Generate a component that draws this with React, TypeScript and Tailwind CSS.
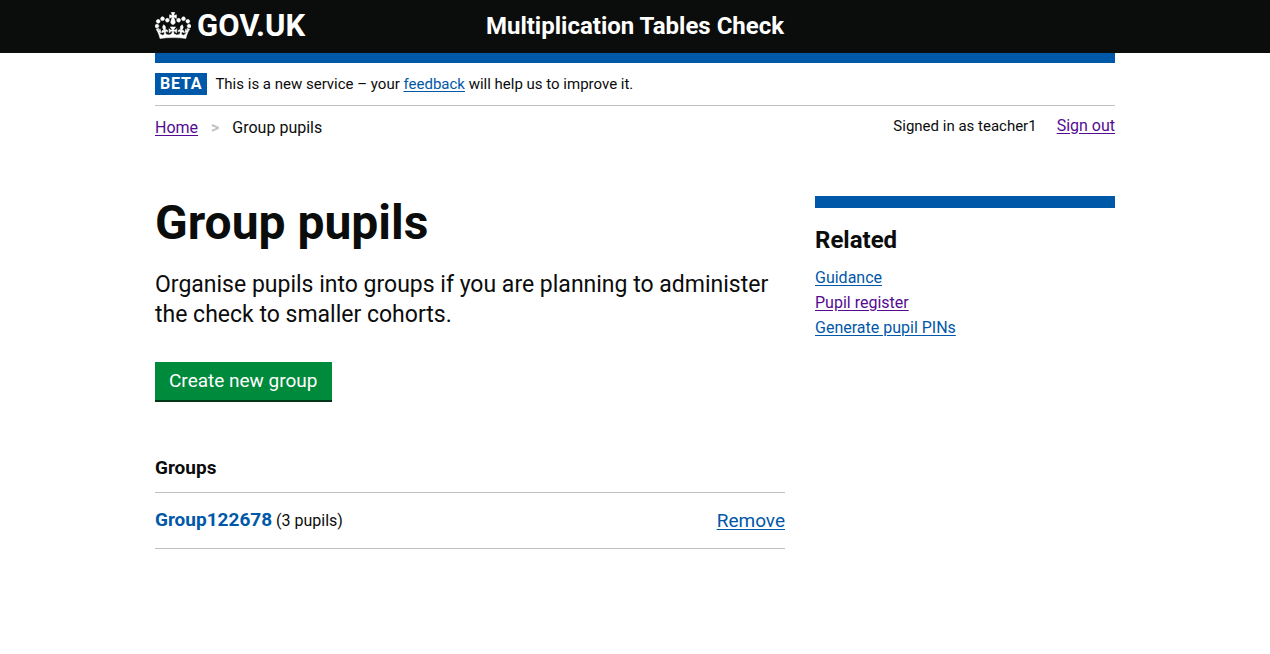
const link = 'text-[#0058a8] underline underline-offset-2'
const visited = 'text-[#540b91] underline underline-offset-2'

const related = [
  { label: 'Guidance', className: link },
  { label: 'Pupil register', className: visited },
  { label: 'Generate pupil PINs', className: link },
]

function Crown() {
  return (
    <svg viewBox="0 0 132 97" className="h-[27px] w-9" fill="currentColor" stroke="currentColor" strokeWidth="2" aria-hidden="true">
      <path
        fillRule="evenodd"
        d="M25 30.2c3.5 1.5 7.7-.2 9.1-3.7 1.5-3.6-.2-7.8-3.9-9.2-3.6-1.4-7.6.3-9.1 3.9-1.4 3.5.3 7.5 3.9 9zM9 39.5c3.6 1.5 7.8-.2 9.2-3.7 1.5-3.6-.2-7.8-3.9-9.1-3.6-1.5-7.6.2-9.1 3.8-1.4 3.5.3 7.5 3.8 9zM4.4 57.2c3.5 1.5 7.7-.2 9.1-3.8 1.5-3.6-.2-7.7-3.9-9.1-3.5-1.5-7.6.3-9.1 3.8-1.4 3.5.3 7.6 3.9 9.1zm38.3-21.4c3.5 1.5 7.7-.2 9.1-3.8 1.5-3.6-.2-7.7-3.9-9.1-3.6-1.5-7.6.3-9.1 3.8-1.3 3.6.4 7.7 3.9 9.1zm64.4-5.6c-3.6 1.5-7.8-.2-9.1-3.7-1.5-3.6.2-7.8 3.8-9.2 3.6-1.4 7.7.3 9.2 3.9 1.3 3.5-.4 7.5-3.9 9zm15.9 9.3c-3.6 1.5-7.7-.2-9.1-3.7-1.5-3.6.2-7.8 3.7-9.1 3.6-1.5 7.7.2 9.2 3.8 1.5 3.5-.3 7.5-3.8 9zm4.7 17.7c-3.6 1.5-7.8-.2-9.2-3.8-1.5-3.6.2-7.7 3.9-9.1 3.6-1.5 7.7.3 9.2 3.8 1.3 3.5-.4 7.6-3.9 9.1zM89.3 35.8c-3.6 1.5-7.8-.2-9.2-3.8-1.4-3.6.2-7.7 3.9-9.1 3.6-1.5 7.7.3 9.2 3.8 1.4 3.6-.3 7.7-3.9 9.1zM69.7 17.7l8.9 4.7V9.3l-8.9 2.8c-.2-.3-.5-.6-.9-.9L72.4 0H59.6l3.5 11.2c-.3.3-.6.5-.9.9l-8.8-2.8v13.1l8.8-4.7c.3.3.6.7.9.9l-5 15.4v.1c-.2.8-.4 1.6-.4 2.4 0 4.1 3.1 7.5 7 8.1h.2c.3 0 .7.1 1 .1.4 0 .7 0 1-.1h.2c4-.6 7.1-4.1 7.1-8.1 0-.8-.1-1.7-.4-2.4V34l-5.1-15.4c.4-.2.7-.6 1-.9zM66 92.8c16.9 0 32.8 1.1 47.1 3.2 4-16.9 8.9-26.7 14-33.5l-9.6-3.4c1 4.9 1.1 7.2 0 10.2-1.5-1.4-3-4.3-4.2-8.7L108.6 76c2.8-2 5-3.2 7.5-3.3-4.4 9.4-10 11.9-13.6 11.2-4.3-.8-6.3-4.6-5.6-7.9 1-4.7 5.7-5.9 8-.5 4.3-8.7-3-11.4-7.6-8.8 7.1-7.2 7.9-13.5 2.1-21.1-8 6.1-8.1 12.3-4.5 20.8-4.7-5.4-12.1-2.5-9.5 6.2 3.4-5.2 7.9-2 7.2 3.1-.6 4.3-6.4 7.8-13.5 7.2-10.3-.9-10.9-8-11.2-13.8 2.5-.5 7.1 1.8 11 7.3L80.2 60c-4.1 4.4-8 5.3-12.3 5.4 1.4-4.4 8-11.6 8-11.6H55.5s6.4 7.2 7.9 11.6c-4.2-.1-8-1-12.3-5.4l1.4 16.4c3.9-5.5 8.5-7.7 10.9-7.3-.3 5.8-.9 12.8-11.1 13.8-7.2.6-12.9-2.9-13.5-7.2-.7-5 3.8-8.3 7.1-3.1 2.7-8.7-4.6-11.6-9.4-6.2 3.7-8.5 3.6-14.7-4.6-20.8-5.8 7.6-5 13.9 2.2 21.1-4.7-2.6-11.9.1-7.7 8.8 2.3-5.5 7.1-4.2 8.1.5.7 3.3-1.3 7.1-5.7 7.9-3.5.7-9-1.8-13.5-11.2 2.5.1 4.7 1.3 7.5 3.3l-4.7-15.4c-1.2 4.4-2.7 7.2-4.3 8.7-1.1-3-.9-5.3 0-10.2l-9.5 3.4c5 6.9 9.9 16.7 14 33.5 14.8-2.1 30.8-3.2 47.7-3.2z"
      />
    </svg>
  )
}

export default function App() {
  return (
    <div className="min-h-screen bg-white font-['Roboto',sans-serif] text-base leading-5 text-[#0b0c0c]">
      <header className="bg-[#0b0c0c] text-white">
        <div className="mx-auto flex h-[53px] max-w-[960px] items-center pb-0.5">
          <a href="#" className="flex flex-1 items-center gap-1.5 text-[31px] leading-8 font-bold">
            <Crown />
            <span>GOV.UK</span>
          </a>
          <a href="#" className="text-2xl font-bold">Multiplication Tables Check</a>
          <div className="flex-1" />
        </div>
      </header>

      <div className="mx-auto max-w-[960px]">
        <div className="h-2.5 bg-[#0058a8]" />
        <div className="flex items-center gap-2 border-b border-[#bfc1c3] py-2.5">
          <strong className="bg-[#0058a8] px-[5px] text-base leading-[22px] tracking-wider text-white">BETA</strong>
          <p className="text-[15px]">This is a new service – your <a href="#" className={link}>feedback</a> will help us to improve it.</p>
        </div>

        <div className="flex justify-between pt-2.5">
          <nav aria-label="Breadcrumb" className="flex items-center gap-[13px] pt-0.5">
            <a href="#" className={visited}>Home</a>
            <span aria-hidden="true" className="font-bold text-[#bfc1c3]">&gt;</span>
            <span>Group pupils</span>
          </nav>
          <div className="flex gap-5">
            <span className="text-[15px] leading-5">Signed in as teacher1</span>
            <a href="#" className={visited}>Sign out</a>
          </div>
        </div>

        <div className="grid grid-cols-[21fr_10fr] gap-[30px] pt-[58px]">
          <main>
            <h1 className="pt-0.5 text-5xl leading-[50px] font-bold">Group pupils</h1>
            <p className="pt-[22px] text-[23px] leading-[30px]">
              Organise pupils into groups if you are planning to administer the check to smaller cohorts.
            </p>
            <button type="button" className="mt-8 h-10 border-b-2 border-[#003618] bg-[#008a3b] px-3.5 text-[19px] text-white">Create new group</button>
            <h2 className="pt-14 text-[19px] leading-5 font-bold">Groups</h2>
            <ul className="mt-3.5 border-y border-[#bfc1c3]">
              <li className="flex h-[55px] items-center justify-between">
                <span><a href="#" className="text-[19px] font-bold text-[#0058a8]">Group122678</a> (3 pupils)</span>
                <a href="#" className="text-[19px] text-[#0058a8] underline underline-offset-2">Remove</a>
              </li>
            </ul>
          </main>
          <aside>
            <div className="border-t-[12px] border-[#0058a8] pt-4">
              <h2 className="text-2xl font-bold">Related</h2>
              <ul className="flex flex-col gap-[5px] pt-3">
                {related.map((item) => (
                  <li key={item.label}>
                    <a href="#" className={item.className}>{item.label}</a>
                  </li>
                ))}
              </ul>
            </div>
          </aside>
        </div>
      </div>
    </div>
  )
}
